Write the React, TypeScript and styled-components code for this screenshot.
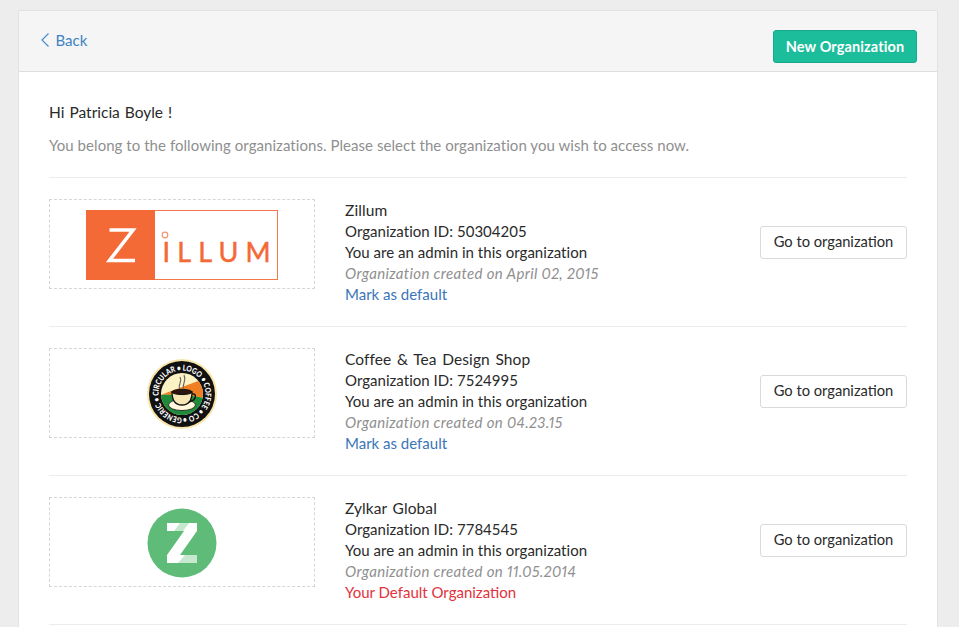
import React from "react";
import styled, { createGlobalStyle } from "styled-components";

const GlobalStyle = createGlobalStyle`
  html, body {
    margin: 0;
    height: 100%;
    overflow: hidden;
    background: #ededed;
    font-family: Lato, "Open Sans", sans-serif;
  }
`

const ZillumLogo = () => (
  <svg width="192" height="70" viewBox="0 0 192 70">
    <rect x="0.5" y="0.5" width="191" height="69" fill="#fff" stroke="#f4764a" />
    <rect width="69" height="70" fill="#f46a36" />
    <path d="M23.5 20 H47 L23.5 50.5 H49" fill="none" stroke="#fff" strokeWidth="3.6" />
    <circle cx="79" cy="25" r="2.8" fill="#fff" stroke="#f4936d" strokeWidth="1.2" />
    <text x="76.5" y="52" fontFamily="Lato, sans-serif" fontSize="27" fill="#f46a36" stroke="#f46a36" strokeWidth="0.5" textLength="108">ILLUM</text>
  </svg>
)

const CoffeeLogo = () => (
  <svg width="72" height="72" viewBox="0 0 72 72">
    <defs>
      <path id="ring" d="M36 59.5 A23.5 23.5 0 1 1 36 12.5 A23.5 23.5 0 1 1 36 59.5" />
      <clipPath id="inner"><circle cx="36" cy="36" r="21" /></clipPath>
    </defs>
    <circle cx="36" cy="36" r="35" fill="#f7e6a8" />
    <circle cx="36" cy="36" r="33" fill="#111" />
    <g clipPath="url(#inner)">
      <rect width="72" height="72" fill="#fdf2c4" />
      <path d="M14 37 L58 21 V40 C46 37 30 36 14 37 Z" fill="#ee7f22" />
      <path d="M14 37 C30 36 46 37 58 40 V60 H14 Z" fill="#1f8a3a" />
      <ellipse cx="36" cy="47" rx="13.5" ry="5.5" fill="#fff8dc" stroke="#111" strokeWidth="0.8" />
      <path d="M26 34 H46 C46 42 43 47 36 47 C29 47 26 42 26 34 Z" fill="#f6e7b5" stroke="#111" strokeWidth="1.3" />
      <ellipse cx="36" cy="34" rx="10" ry="2.6" fill="#2a160c" stroke="#111" />
      <path d="M46 36 C51 35 51 42 43 44" fill="none" stroke="#111" strokeWidth="1.4" />
      <path d="M34 31 C31 27 37 24 34 19 M38 31 C35 27 41 24 38 17" fill="none" stroke="#666" strokeWidth="1.1" />
    </g>
    <text fontFamily="Lato, sans-serif" fontSize="8" fontWeight="900" fill="#fff" textLength="146" lengthAdjust="spacingAndGlyphs">
      <textPath href="#ring">GENERIC • CIRCULAR • LOGO • COFFEE • CO •</textPath>
    </text>
  </svg>
)

const ZylkarLogo = () => (
  <svg width="70" height="70" viewBox="0 0 70 70">
    <circle cx="35" cy="35" r="34.5" fill="#5fbb78" />
    <path d="M20 15 H50 V23 L33 47 H50 V55 H20 V47 L37 23 H20 Z" fill="#fff" />
    <path d="M33 15 H42 L36 23 H27 Z M38 47 H50 V55 H31 Z" fill="#c6e8cf" />
  </svg>
)

type Org = {
  name: string
  id: string
  created: string
  isDefault?: boolean
  logo: React.ReactNode
}

const orgs: Org[] = [
  { name: "Zillum", id: "50304205", created: "April 02, 2015", logo: <ZillumLogo /> },
  { name: "Coffee & Tea Design Shop", id: "7524995", created: "04.23.15", logo: <CoffeeLogo /> },
  { name: "Zylkar Global", id: "7784545", created: "11.05.2014", isDefault: true, logo: <ZylkarLogo /> },
]

export default function App() {
  return (
    <>
      <GlobalStyle />
      <Page>
        <Card>
          <Header>
            <BackLink>
              <svg width="10" height="16" viewBox="0 0 10 16">
                <path d="M8.5 1.5 L2 8 L8.5 14.5" fill="none" stroke="#4a8fd0" strokeWidth="1.2" />
              </svg>
              Back
            </BackLink>
            <NewButton>New Organization</NewButton>
          </Header>
          <Body>
            <Greeting>Hi Patricia Boyle !</Greeting>
            <Intro>You belong to the following organizations. Please select the organization you wish to access now.</Intro>
            {orgs.map(org => (
              <OrgRow key={org.id}>
                <LogoBox>{org.logo}</LogoBox>
                <OrgInfo>
                  <NameLine>{org.name}</NameLine>
                  <InfoLine>Organization ID: {org.id}</InfoLine>
                  <InfoLine>You are an admin in this organization</InfoLine>
                  <CreatedLine>Organization created on {org.created}</CreatedLine>
                  {org.isDefault
                    ? <DefaultLine>Your Default Organization</DefaultLine>
                    : <MarkDefault>Mark as default</MarkDefault>}
                </OrgInfo>
                <GoButton>Go to organization</GoButton>
              </OrgRow>
            ))}
          </Body>
        </Card>
      </Page>
    </>
  )
}

const Page = styled.div`
  height: 100vh;
  box-sizing: border-box;
  padding: 10px 21px 0 18px;
  overflow: hidden;
`

const Card = styled.div`
  height: 100%;
  box-sizing: border-box;
  background: #fff;
  border: 1px solid #e2e2e2;
  border-bottom: none;
  border-radius: 2px 2px 0 0;
`

const Header = styled.div`
  height: 61px;
  box-sizing: border-box;
  padding: 19px 20px 0 21px;
  display: flex;
  justify-content: space-between;
  align-items: flex-start;
  background: #f5f5f5;
  border-bottom: 1px solid #dedede;
`

const BackLink = styled.a`
  display: flex;
  align-items: center;
  gap: 5.5px;
  height: 20px;
  font-size: 15px;
  color: #3f83c4;
`

const NewButton = styled.button`
  width: 144px;
  height: 33px;
  border: 1px solid #17a98c;
  border-radius: 3px;
  background: #1bbd9b;
  color: #fff;
  font: 700 14.5px Lato, sans-serif;
  letter-spacing: 0.1px;
  padding: 0 0 1px;
`

const Body = styled.div`
  padding: 0 30px;
`

const Greeting = styled.div`
  margin-top: 30px;
  height: 20px;
  line-height: 20px;
  font-size: 15.5px;
  word-spacing: 1px;
  color: #2a2a2a;
`

const Intro = styled.div`
  margin-top: 13px;
  margin-bottom: 22px;
  height: 20px;
  line-height: 20px;
  font-size: 15px;
  letter-spacing: 0.05px;
  color: #8f8f8f;
`

const OrgRow = styled.div`
  height: 149px;
  box-sizing: border-box;
  padding-top: 21px;
  border-top: 1px solid #ececec;
  display: flex;
  align-items: flex-start;

  &:last-child {
    height: 150px;
    border-bottom: 1px solid #ececec;
  }
`

const LogoBox = styled.div`
  width: 266px;
  height: 90px;
  box-sizing: border-box;
  padding-top: 2px;
  border: 1px dashed #d6d6d6;
  display: flex;
  align-items: center;
  justify-content: center;
  flex-shrink: 0;
`

const OrgInfo = styled.div`
  margin-left: 30px;
  padding-top: 1px;
  flex: 1;
`

const InfoLine = styled.div`
  height: 21px;
  line-height: 21px;
  font-size: 15px;
  letter-spacing: 0.03px;
  color: #2a2a2a;
`

const NameLine = styled(InfoLine)`
  font-size: 15.5px;
  letter-spacing: 0.1px;
  word-spacing: 1.5px;
`

const CreatedLine = styled(InfoLine)`
  font-style: italic;
  letter-spacing: 0.35px;
  font-variant-numeric: proportional-nums;
  color: #8f8f8f;
`

const MarkDefault = styled(InfoLine)`
  letter-spacing: 0;
  color: #3a75b8;
`

const DefaultLine = styled(InfoLine)`
  letter-spacing: 0;
  color: #e2323c;
`

const GoButton = styled.button`
  width: 147px;
  height: 33px;
  margin-top: 27px;
  border: 1px solid #d9d9d9;
  border-radius: 3px;
  background: #fff;
  color: #2a2a2a;
  font: 400 14.7px Lato, sans-serif;
  padding: 0 0 3px;
`
